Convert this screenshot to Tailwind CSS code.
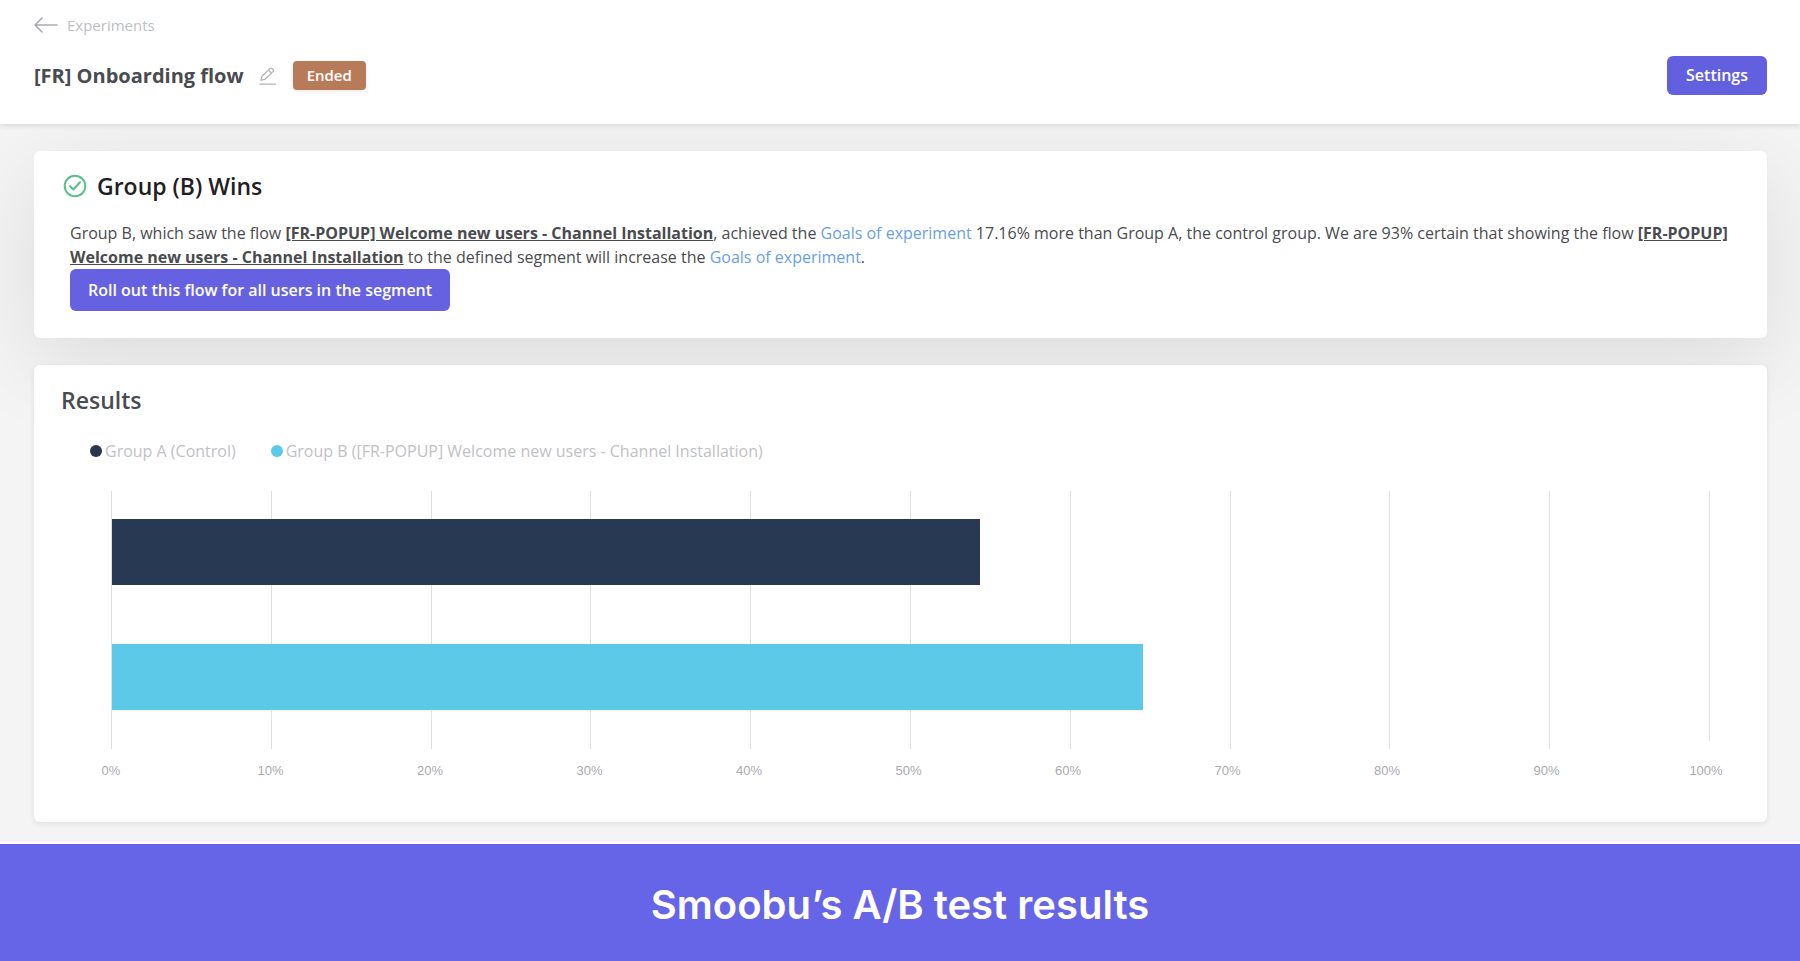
<!DOCTYPE html>
<html lang="en">
<head>
    <meta charset="UTF-8">
    <meta name="viewport" content="width=device-width, initial-scale=1.0">
    <title>[FR] Onboarding flow</title>
    <script src="https://cdn.jsdelivr.net/npm/@tailwindcss/browser@4"></script>
</head>
<body class="min-h-screen flex flex-col bg-[#f4f4f5] font-['Open_Sans',sans-serif] text-[#4a4b4f]">
    <!-- Header -->
    <header class="relative z-10 bg-white pl-[34px] pr-[33px] pt-3 pb-[29px] shadow-[0_2px_5px_rgba(0,0,0,0.1)]">
        <a href="#" class="flex w-fit items-center gap-[9px] text-[15px] leading-[26px] text-[#bdbfc3]">
            <svg class="w-6 h-4" viewBox="0 0 24 16" fill="none" stroke="#a9acb1" stroke-width="1.6" stroke-linecap="round" stroke-linejoin="round">
                <path d="M23 8H1M8 1L1 8l7 7" />
            </svg>
            Experiments
        </a>
        <div class="flex items-center justify-between pt-[18px]">
            <div class="flex items-center">
                <h1 class="text-[20px] leading-7 font-bold">[FR] Onboarding flow</h1>
                <button aria-label="Rename" class="ml-[15px]">
                    <svg class="w-[18px] h-[18px]" viewBox="0 0 18 18" fill="none" stroke="#b3b5b9" stroke-width="1.3" stroke-linecap="round" stroke-linejoin="round">
                        <path d="M2 13.2l.9-3.9L11 1.600a1.500 1.500 0 0 1 2.100 0l.9.9a1.500 1.500 0 0 1 0 2.100L6 12.300z" />
                        <path d="M9.500 3.100l2.900 2.900M1 17.200h15.500" />
                    </svg>
                </button>
                <span class="ml-4 rounded-sm bg-[#b87b59] px-3.5 text-[15px] leading-[29px] font-semibold text-white shadow-[0_2px_4px_rgba(184,123,89,0.15)]">Ended</span>
            </div>
            <button class="rounded-md bg-[#6360e0] px-[19px] text-[16px] leading-[39px] font-semibold text-white">Settings</button>
        </div>
    </header>

    <main class="flex-1 flex flex-col gap-[27px] pl-[34px] pr-[33px] pt-[27px] pb-5 overflow-hidden">
        <!-- Winner -->
        <section class="rounded-md bg-white pl-[29px] pr-7 pt-5 pb-[27px] shadow-[0_24px_90px_rgba(0,0,0,0.1)]">
            <div class="flex items-center gap-2.5">
                <svg class="w-6 h-6" viewBox="0 0 24 24" fill="none" stroke="#58c08a" stroke-width="2" stroke-linecap="round" stroke-linejoin="round">
                    <circle cx="12" cy="12" r="10.300" />
                    <path d="M7 12.300l3.300 3.200 6.700-7.200" />
                </svg>
                <h2 class="text-[23px] leading-[30px] font-semibold text-[#1f2023]">Group (B) Wins</h2>
            </div>
            <div class="pl-[7px] pt-5">
                <p class="text-[16px] leading-6">Group B, which saw the flow <a href="#" class="font-bold underline">[FR-POPUP] Welcome new users - Channel Installation</a>, achieved the <a href="#" class="text-[#6a9fe0]">Goals of experiment</a> 17.16% more than Group A, the control group. We are 93% certain that showing the flow <a href="#" class="font-bold underline">[FR-POPUP] Welcome new users - Channel Installation</a> to the defined segment will increase the <a href="#" class="text-[#6a9fe0]">Goals of experiment</a>.</p>
                <button class="block rounded-md bg-[#6661e0] px-[18px] text-[16px] leading-[42px] font-semibold text-white">Roll out this flow for all users in the segment</button>
            </div>
        </section>

        <!-- Results -->
        <section class="relative rounded-md bg-white pt-5 pb-[41px] shadow-[0_2px_6px_rgba(0,0,0,0.08)]">
            <h2 class="px-[27px] text-[23px] leading-[30px] font-semibold">Results</h2>
            <div class="flex gap-[35px] pl-14 pt-6 text-[16px] leading-6 text-[#bfc1c5]">
                <span class="flex items-center gap-[3px]"><i class="size-3 rounded-full bg-[#28364f]"></i>Group A (Control)</span>
                <span class="flex items-center gap-[3px]"><i class="size-3 rounded-full bg-[#5dc9e9]"></i>Group B ([FR-POPUP] Welcome new users - Channel Installation)</span>
            </div>
            <div class="grid pl-[77px] pr-[57px] pt-7">
                <div id="lines" class="col-start-1 row-start-1 flex justify-between h-[258px]"></div>
                <div id="bars" class="col-start-1 row-start-1 flex flex-col gap-[59px] pl-px pt-7"></div>
            </div>
            <div id="ticks" class="flex justify-between pl-[77px] pr-[61px] pt-3 font-['Liberation_Sans',sans-serif] text-[13px] leading-5 text-[#a9abaf]"></div>
        </section>
    </main>

    <footer class="border-t-2 border-white bg-[#6765e7] pt-[37px] pb-8 text-center font-['Inter',sans-serif] text-[40px] leading-[48px] font-semibold text-white">Smoobu’s A/B test results</footer>

    <script>
        const groups = [
            { value: 54.3, color: "bg-[#283953]" },
            { value: 64.5, color: "bg-[#5dc9e9]" }
        ];

        for (let i = 0; i <= 100; i += 10) {
            const height = i === 100 ? "h-[250px]" : "h-full";
            document.getElementById("lines").innerHTML += `<i class="w-px bg-[#dfe0e4] ${height}"></i>`;
            document.getElementById("ticks").innerHTML += `<span class="flex justify-center w-0">${i}%</span>`;
        }

        groups.forEach(function (group) {
            document.getElementById("bars").innerHTML += `<div class="h-[66px] ${group.color}" style="width: ${group.value}%"></div>`;
        });
    </script>
</body>
</html>
